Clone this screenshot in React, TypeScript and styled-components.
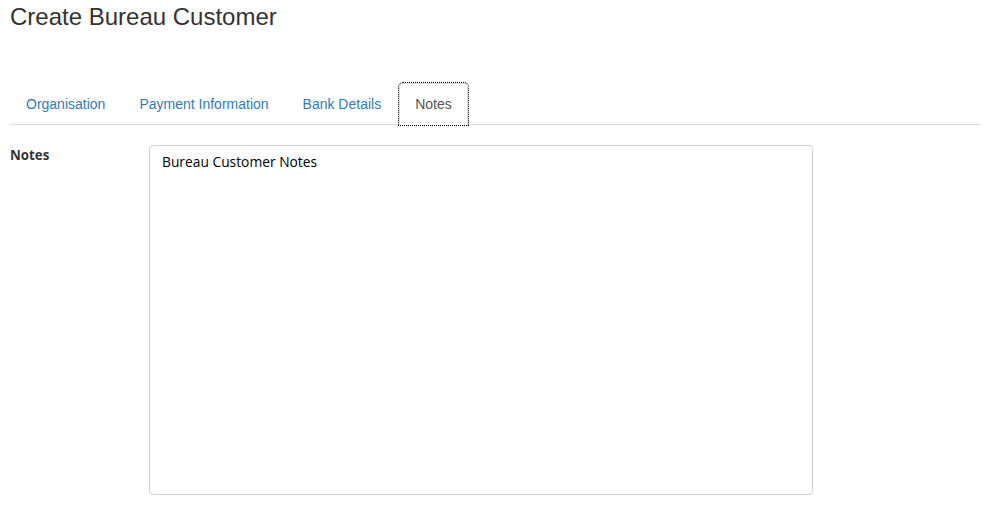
import { useState } from 'react'
import styled, { createGlobalStyle } from 'styled-components'

const GlobalStyle = createGlobalStyle`
  html, body {
    margin: 0;
    padding: 0;
    background: #fff;
  }
  body {
    font-family: "Liberation Sans", Arial, Helvetica, sans-serif;
    font-size: 14px;
    line-height: 20px;
    color: #333;
  }
  * {
    box-sizing: border-box;
  }
`

const Page = styled.div`
  padding: 4px 18px 0 10px;
`

const Title = styled.h3`
  margin: 0;
  font-family: "Liberation Sans", Arial, sans-serif;
  font-size: 24px;
  font-weight: 400;
  line-height: 26.4px;
  color: #333;
`

const TabList = styled.ul`
  display: flex;
  list-style: none;
  margin: 53px 0 0;
  padding: 0;
  border-bottom: 1px solid #ddd;
`

const TabItem = styled.li`
  margin-bottom: -1px;
`

const TabLink = styled.a<{ $active?: boolean }>`
  display: block;
  margin-right: 2px;
  padding: 10px 15px;
  line-height: 20px;
  font-size: 14px;
  text-decoration: none;
  cursor: pointer;
  border: 1px solid transparent;
  border-radius: 4px 4px 0 0;
  color: ${p => (p.$active ? '#555' : '#337ab7')};
  background: ${p => (p.$active ? '#fff' : 'transparent')};
  border-color: ${p => (p.$active ? '#ddd #ddd transparent' : 'transparent')};
  outline: ${p => (p.$active ? '1px dotted #000' : 'none')};
`

const FormRow = styled.div`
  display: grid;
  grid-template-columns: 139px 664px;
  margin-top: 20px;
`

const Label = styled.label`
  font-family: "Open Sans", "Noto Sans", sans-serif;
  font-size: 13.3px;
  font-weight: 700;
  line-height: 20px;
  color: #333;
`

const NotesArea = styled.textarea`
  width: 664px;
  height: 350px;
  padding: 6px 12px;
  border: 1px solid #ccc;
  border-radius: 4px;
  resize: none;
  font-family: "Open Sans", "Noto Sans", sans-serif;
  font-size: 13.8px;
  line-height: 20px;
  color: #000;
  outline: none;
`

const tabs = ['Organisation', 'Payment Information', 'Bank Details', 'Notes']

export default function App() {
  const [active, setActive] = useState('Notes')
  const [notes, setNotes] = useState('Bureau Customer Notes')

  return (
    <>
      <GlobalStyle />
      <Page>
        <Title>Create Bureau Customer</Title>
        <TabList>
          {tabs.map(t => (
            <TabItem key={t}>
              <TabLink $active={t === active} onClick={() => setActive(t)}>
                {t}
              </TabLink>
            </TabItem>
          ))}
        </TabList>
        <FormRow>
          <Label htmlFor="notes">Notes</Label>
          <NotesArea id="notes" value={notes} onChange={e => setNotes(e.target.value)} />
        </FormRow>
      </Page>
    </>
  )
}
